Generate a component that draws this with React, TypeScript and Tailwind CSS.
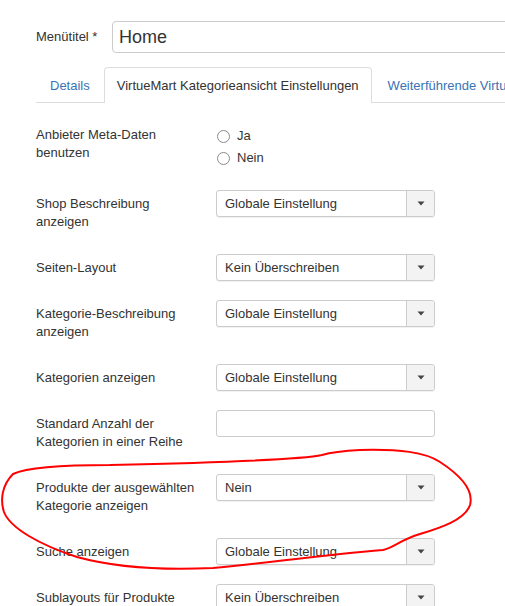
import { ReactNode } from "react";

type Row = {
    label: string[];
    kind: "select" | "text";
    value?: string;
};

const ROWS: Row[] = [
    { label: ["Shop Beschreibung", "anzeigen"], kind: "select", value: "Globale Einstellung" },
    { label: ["Seiten-Layout"], kind: "select", value: "Kein Überschreiben" },
    { label: ["Kategorie-Beschreibung", "anzeigen"], kind: "select", value: "Globale Einstellung" },
    { label: ["Kategorien anzeigen"], kind: "select", value: "Globale Einstellung" },
    { label: ["Standard Anzahl der", "Kategorien in einer Reihe"], kind: "text" },
    { label: ["Produkte der ausgewählten", "Kategorie anzeigen"], kind: "select", value: "Nein" },
    { label: ["Suche anzeigen"], kind: "select", value: "Globale Einstellung" },
    { label: ["Sublayouts für Produkte"], kind: "select", value: "Kein Überschreiben" },
];

function Caret() {
    return (
        <svg width="8" height="5" viewBox="0 0 8 5">
            <path d="M0.5 0.5 L7.5 0.5 L4 4.5 Z" fill="#444" />
        </svg>
    );
}

function SelectBox({ value }: { value: string }) {
    return (
        <div className="flex h-[27px] w-[219px] overflow-hidden rounded-[3px] border border-[#cccccc] bg-white shadow-[0_1px_1px_rgba(0,0,0,0.06)]">
            <div className="flex flex-1 items-center pl-[8px] text-[13px] text-[#333]">{value}</div>
            <div className="flex w-[28px] items-center justify-center border-l border-[#cccccc] bg-[#f3f3f3]">
                <Caret />
            </div>
        </div>
    );
}

function Radio({ children }: { children: ReactNode }) {
    return (
        <div className="flex h-[18px] items-center">
            <span className="ml-[1px] mr-[7px] inline-block h-[13px] w-[13px] rounded-full border-[1.5px] border-[#8a8a8a] bg-white" />
            <span>{children}</span>
        </div>
    );
}

function FieldRow({ row }: { row: Row }) {
    const twoLines = row.label.length > 1;
    return (
        <div className={"flex " + (twoLines ? "h-[45px] mb-[19px]" : "h-[27px] mb-[19px]")}>
            <div className="w-[180px] shrink-0 pt-[5px] leading-[18px]">
                {row.label.map((l) => (
                    <div key={l}>{l}</div>
                ))}
            </div>
            {row.kind === "select" ? (
                <SelectBox value={row.value ?? ""} />
            ) : (
                <div className="h-[27px] w-[219px] rounded-[3px] border border-[#cccccc] bg-white" />
            )}
        </div>
    );
}

// freihand markierung um die produkte-zeile
function Scribble() {
    return (
        <svg className="pointer-events-none absolute left-0 top-0" width="505" height="606" viewBox="0 0 505 606">
            <path
                d="M110 465 C80 465 30 466 13 474 C2 485 0 500 4 512 C10 528 40 545 77 557 C110 566 150 571 213 568 C260 564 320 555 383 550 C395 547 400 540 420 534 C440 528 465 520 470 505 C474 490 460 475 440 462 C425 452 400 449 360 450 C340 451 332 452 322 455 C300 460 200 463 110 465"
                fill="none"
                stroke="#ff0000"
                strokeWidth="2"
                strokeLinecap="round"
                strokeLinejoin="round"
            />
        </svg>
    );
}

export default function App() {
    return (
        <div className="relative h-[606px] w-[505px] overflow-hidden bg-white font-['Liberation_Sans',Arial,sans-serif] text-[13px] text-[#333]">
            <div className="flex items-center pl-[36px] pt-[21px]">
                <div className="w-[76px] shrink-0">Menütitel *</div>
                <div className="flex h-[32px] w-[420px] shrink-0 items-center rounded-[4px] border border-[#cccccc] bg-white pl-[6px] text-[18px] text-[#333]">
                    Home
                </div>
            </div>

            <div className="ml-[36px] mt-[14px] flex h-[36px] whitespace-nowrap border-b border-[#dddddd]">
                <div className="px-[14px] pt-[9px] text-[#3a73b4]">Details</div>
                <div className="-mb-px rounded-t-[4px] border border-b-0 border-[#dddddd] bg-white px-[12px] pt-[8px]">
                    VirtueMart Kategorieansicht Einstellungen
                </div>
                <div className="shrink-0 px-[16px] pt-[9px] text-[#3a73b4]">Weiterführende VirtueMart Einstellungen</div>
            </div>

            <div className="pl-[36px] pt-[18px]">
                <div className="mb-[23px] flex h-[46px]">
                    <div className="w-[180px] shrink-0 pt-[5px] leading-[18px]">
                        <div>Anbieter Meta-Daten</div>
                        <div>benutzen</div>
                    </div>
                    <div className="flex flex-col gap-[4px] pt-[6px]">
                        <Radio>Ja</Radio>
                        <Radio>Nein</Radio>
                    </div>
                </div>
                {ROWS.map((r) => (
                    <FieldRow key={r.label[0]} row={r} />
                ))}
            </div>

            <Scribble />
        </div>
    );
}
